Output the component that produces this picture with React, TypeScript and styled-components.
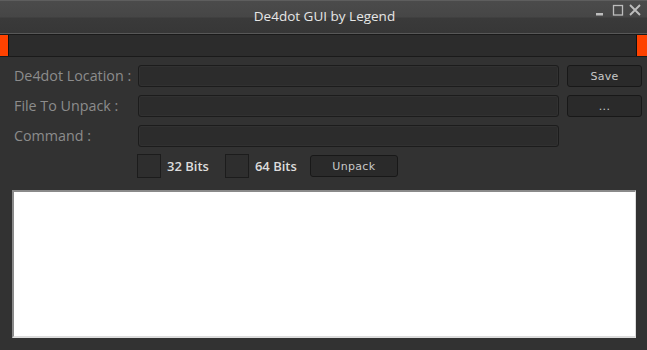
import React from "react";
import styled, { createGlobalStyle } from "styled-components";

const Global = createGlobalStyle`
  html, body { margin: 0; padding: 0; background: #333; }
  * { box-sizing: border-box; }
`;

const Window = styled.div`
  width: 647px;
  height: 350px;
  background: #323232;
  display: flex;
  flex-direction: column;
  font-family: "Open Sans", "Noto Sans", sans-serif;
  overflow: hidden;
`;

const TitleBar = styled.div`
  height: 34px;
  position: relative;
  background: linear-gradient(#4b4b4b 0, #464646 16px, #3a3a3a 17px, #373737 32px);
  border-top: 1px solid #5e5e5e;
  border-bottom: 1px solid #585858;
  display: flex;
  align-items: center;
  justify-content: center;
`;

const Title = styled.span`
  color: #e6e6e6;
  font-size: 13.5px;
  font-family: "Open Sans", sans-serif;
  margin-top: -2px;
  margin-left: 2px;
`;

const Controls = styled.div`
  position: absolute;
  right: 6px;
  top: 3px;
  display: flex;
  gap: 5px;
  align-items: center;
`;

type Side = { side: "l" | "r" };

const AccentBar = styled.div`
  height: 23px;
  background: #2c2c2c;
  border-top: 1px solid #1a1a1a;
  border-bottom: 1px solid #1a1a1a;
  display: flex;
  justify-content: space-between;
`;

const Accent = styled.div<Side>`
  background: #ff4200;
  border-left: ${(p) => (p.side === "r" ? "1px solid #111" : "none")};
  border-right: ${(p) => (p.side === "l" ? "1px solid #111" : "none")};
  width: ${(p) => (p.side === "l" ? "9px" : "11px")};
`;

const Content = styled.div`
  flex: 1;
  display: flex;
  flex-direction: column;
  padding: 8px 5px 0 14px;
`;

const Form = styled.div`
  display: grid;
  grid-template-columns: 116px 421px 75px;
  column-gap: 8px;
  row-gap: 8px;
  align-items: center;
`;

const Label = styled.label`
  color: #8c8c8c;
  font-size: 14.3px;
  white-space: nowrap;
  margin-top: -1px;
`;

const Field = styled.div`
  height: 22px;
  background: #2c2c2c;
  border: 1px solid #1c1c1c;
  border-radius: 3px;
  box-shadow: inset 0 0 0 1px #313131;
`;

const Button = styled.button<{ w?: number }>`
  height: 22px;
  width: ${(p) => (p.w ? `${p.w}px` : "100%")};
  background: #2a2a2a;
  border: 1px solid #181818;
  border-radius: 3px;
  color: #c8c8c8;
  font-family: "DejaVu Sans", Verdana, sans-serif;
  font-size: 11px;
  padding: 0;
  letter-spacing: 0.3px;
  cursor: pointer;
`;

const OptionsRow = styled.div`
  display: flex;
  align-items: center;
  margin-left: 123px;
  margin-top: 7px;
`;

const Check = styled.span`
  width: 24px;
  height: 24px;
  border: 1px solid #1c1c1c;
  background: #2e2e2e;
  display: inline-block;
`;

const CheckLabel = styled.span<{ gap: number }>`
  color: #dcdcdc;
  font-size: 13px;
  font-weight: 600;
  margin-left: 6px;
  margin-right: ${(p) => p.gap}px;
`;

const Output = styled.div`
  margin: 12px 6px 12px -2px;
  flex: 1;
  background: #fff;
  border-top: 2px solid #8a8a8a;
  border-left: 2px solid #8a8a8a;
  border-right: 1px solid #dcdcdc;
  border-bottom: 2px solid #dcdcdc;
`;

export default function App() {
  return (
    <>
      <Global />
      <Window>
        <TitleBar>
          <Title>De4dot GUI by Legend</Title>
          <Controls>
            <svg width="12" height="12" viewBox="0 0 12 12">
              <rect x="1" y="9" width="7" height="2.5" fill="#bdbdbd" />
            </svg>
            <svg width="12" height="12" viewBox="0 0 12 12">
              <rect x="1.5" y="1.5" width="9" height="9.5" fill="none" stroke="#bdbdbd" strokeWidth="1.3" />
            </svg>
            <svg width="12" height="12" viewBox="0 0 12 12">
              <path d="M1 1 L11 11 M11 1 L1 11" stroke="#bdbdbd" strokeWidth="1.9" />
            </svg>
          </Controls>
        </TitleBar>
        <AccentBar>
          <Accent side="l" />
          <Accent side="r" />
        </AccentBar>
        <Content>
          <Form>
            <Label>De4dot Location :</Label>
            <Field />
            <Button>Save</Button>
            <Label>File To Unpack :</Label>
            <Field />
            <Button>...</Button>
            <Label>Command :</Label>
            <Field />
            <span />
          </Form>
          <OptionsRow>
            <Check />
            <CheckLabel gap={16}>32 Bits</CheckLabel>
            <Check />
            <CheckLabel gap={13}>64 Bits</CheckLabel>
            <Button w={88}>Unpack</Button>
          </OptionsRow>
          <Output />
        </Content>
      </Window>
    </>
  );
}
